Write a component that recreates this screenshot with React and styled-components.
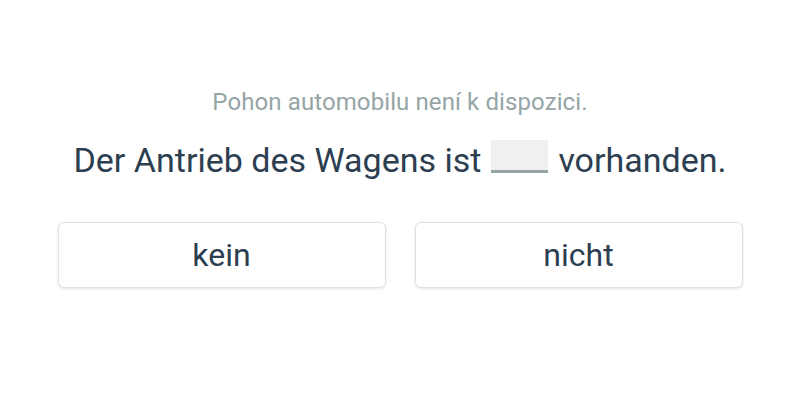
import React from 'react';
import styled, { createGlobalStyle } from 'styled-components';

const GlobalStyle = createGlobalStyle`
  html, body {
    margin: 0;
    padding: 0;
    background: #fff;
    font-family: Roboto, "Liberation Sans", sans-serif;
  }
`;

const Page = styled.div`
  width: 800px;
  height: 400px;
  display: flex;
  flex-direction: column;
  align-items: center;
  padding-top: 88px;
  box-sizing: border-box;
`;

const Hint = styled.div`
  font-size: 24px;
  line-height: 28px;
  letter-spacing: 0.1px;
  color: #95a5a6;
`;

const Sentence = styled.div`
  margin-top: 24px;
  font-size: 34px;
  line-height: 40px;
  color: #2c3e50;
  display: flex;
  align-items: center;
  gap: 9px;
`;

const Blank = styled.span`
  display: inline-block;
  width: 57px;
  height: 30px;
  background: #eef0f1;
  border-bottom: 3px solid #95a5a6;
  margin: -8px 1px 0;
`;

const Options = styled.div`
  margin-top: 42px;
  display: flex;
  gap: 29px;
`;

const Option = styled.button`
  width: 328px;
  height: 66px;
  background: #fff;
  border: 1px solid #dfe1e2;
  border-radius: 6px;
  box-shadow: 0 1px 3px rgba(0, 0, 0, 0.1);
  font-family: Roboto, "Liberation Sans", sans-serif;
  font-size: 32px;
  color: #2c3e50;
  cursor: pointer;
`;

export default function App() {
  return (
    <>
      <GlobalStyle />
      <Page>
        <Hint>Pohon automobilu není k dispozici.</Hint>
        <Sentence>
          <span>Der Antrieb des Wagens ist</span>
          <Blank />
          <span>vorhanden.</span>
        </Sentence>
        <Options>
          <Option>kein</Option>
          <Option>nicht</Option>
        </Options>
      </Page>
    </>
  );
}
